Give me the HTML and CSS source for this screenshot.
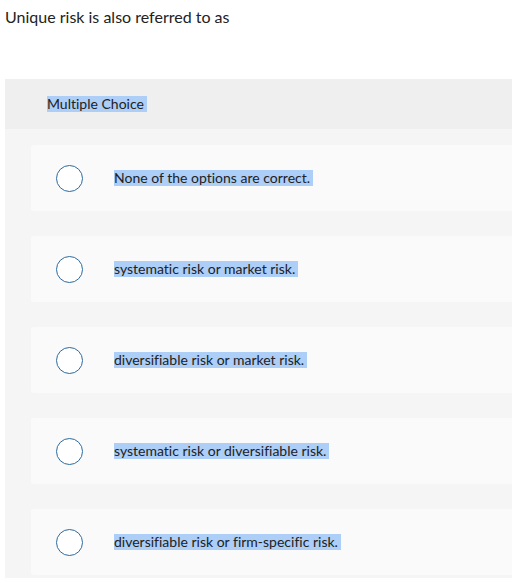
FILE: index.html
```html
<!DOCTYPE html>
<html>
<head>
<meta charset="utf-8">
<link rel="stylesheet" href="styles.css">
</head>
<body>
<p class="question">Unique risk is also referred to as</p>
<section class="panel">
  <div class="panel-head"><span class="sel">Multiple Choice</span></div>
  <div class="choices">
    <div class="choice"><span class="radio"></span><span class="label sel">None of the options are correct.</span></div>
    <div class="choice"><span class="radio"></span><span class="label sel">systematic risk or market risk.</span></div>
    <div class="choice"><span class="radio"></span><span class="label sel">diversifiable risk or market risk.</span></div>
    <div class="choice"><span class="radio"></span><span class="label sel">systematic risk or diversifiable risk.</span></div>
    <div class="choice"><span class="radio"></span><span class="label sel">diversifiable risk or firm-specific risk.</span></div>
  </div>
</section>
</body>
</html>
```
FILE: styles.css
```css
html, body {
  margin: 0;
  padding: 0;
  background: #ffffff;
  overflow: hidden;
}
body {
  font-family: Lato, "Open Sans", sans-serif;
  font-variant-ligatures: none;
  color: #222222;
  width: 512px;
  height: 578px;
}
.question {
  margin: 0;
  padding: 7px 0 0 5px;
  font-size: 16px;
  line-height: 19px;
  height: 72px;
}
.panel {
  margin-left: 5px;
  width: 520px;
  background: #f5f5f5;
  padding-bottom: 10px;
}
.panel-head {
  height: 50px;
  background: #efefef;
  display: flex;
  align-items: center;
  padding-left: 42px;
  font-size: 14px;
}
.sel {
  background: #accef7;
  line-height: 16px;
  padding-right: 3px;
}
.choices {
  display: flex;
  flex-direction: column;
  gap: 25px;
  padding: 16px 0 0 26px;
}
.choice {
  height: 66px;
  background: #fafafa;
  border-radius: 3px;
  display: flex;
  align-items: center;
  padding-left: 25px;
  font-size: 14px;
}
.radio {
  width: 25px;
  height: 25px;
  border: 1.5px solid #2c6aa0;
  border-radius: 50%;
  background: #ffffff;
  flex: none;
}
.label {
  margin-left: 31px;
  padding-right: 3px;
}
```
